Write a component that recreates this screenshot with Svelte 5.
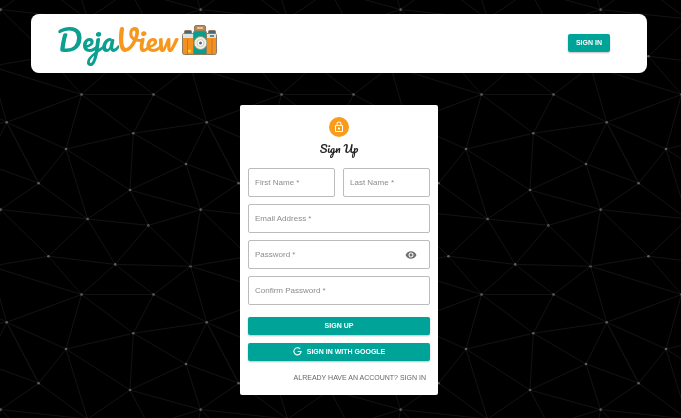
<script>
  const TILE = 200;
  const nodes = {
    a: [81.5, 94.5], b: [153.5, 94.5], c: [6.7, 122.3], d: [133.3, 133.3],
    e: [66, 149], f: [186, 164], g: [38.6, 183.2], h: [130, 190],
    i: [0.6, 209.6], j: [87.6, 219], k: [148.5, 225.4], l: [48.4, 256.3],
    m: [115.2, 264.4], n: [190.6, 266.3]
  };
  // from, to, and how many tiles right / down the end node lies
  const edges = [
    ['a', 'b'], ['a', 'c'], ['a', 'e'], ['a', 'd'], ['b', 'd'], ['b', 'c', 1],
    ['c', 'e'], ['c', 'g'], ['d', 'e'], ['d', 'c', 1], ['d', 'f'], ['d', 'h'],
    ['e', 'g'], ['e', 'h'], ['e', 'j'], ['f', 'c', 1], ['f', 'h'], ['f', 'g', 1],
    ['f', 'i', 1], ['g', 'i'], ['g', 'j'], ['g', 'c'], ['h', 'j'], ['h', 'k'],
    ['h', 'i', 1], ['i', 'j'], ['i', 'l'], ['i', 'k', -1], ['i', 'n', -1],
    ['j', 'l'], ['j', 'm'], ['j', 'k'], ['k', 'm'], ['k', 'n'], ['l', 'm'],
    ['l', 'a', 0, 1], ['m', 'n'], ['m', 'a', 0, 1], ['m', 'b', 0, 1],
    ['n', 'b', 0, 1], ['n', 'c', 1, 1], ['n', 'l', 1], ['n', 'a', 1, 1]
  ];
  const copies = [-1, 0, 1].flatMap((x) => [-2, -1, 0, 1].map((y) => [x * TILE, y * TILE]));
  const lines = edges.map(([from, to, dx = 0, dy = 0]) => {
    const [x1, y1] = nodes[from];
    const [x2, y2] = nodes[to];
    return `M${x1} ${y1}L${x2 + dx * TILE} ${y2 + dy * TILE}`;
  }).join('');

  const fields = [
    { id: 'firstName', label: 'First Name', type: 'text', half: true },
    { id: 'lastName', label: 'Last Name', type: 'text', half: true },
    { id: 'email', label: 'Email Address', type: 'email' },
    { id: 'password', label: 'Password', type: 'password', reveal: true },
    { id: 'confirmPassword', label: 'Confirm Password', type: 'password' }
  ];
  let values = $state({ firstName: '', lastName: '', email: '', password: '', confirmPassword: '' });
  let shown = $state(false);
</script>

<svg class="backdrop" aria-hidden="true">
  <defs>
    <pattern id="mesh" width={TILE} height={TILE} patternUnits="userSpaceOnUse">
      {#each copies as [x, y]}
        <g transform="translate({x} {y})">
          <path d={lines} stroke="#121212" stroke-width="1" fill="none" />
          {#each Object.values(nodes) as [cx, cy]}
            <circle {cx} {cy} r="1.3" fill="#5c5c5c" />
          {/each}
        </g>
      {/each}
    </pattern>
  </defs>
  <rect width="100%" height="100%" fill="#000" />
  <rect width="100%" height="100%" fill="url(#mesh)" />
</svg>

<div class="page">
  <header>
    <a class="brand" href="#home">
      <span class="name"><span class="deja">Deja</span><span class="view">View</span></span>
      <svg class="camera" viewBox="0 0 37 32" aria-hidden="true">
        <g stroke="#8d7b62" stroke-width="1">
          <rect x="3.500" y="6.500" width="7" height="4" rx="1" fill="#4b6672" />
          <rect x="27.500" y="6.500" width="7" height="4" rx="1" fill="#4b6672" />
          <rect x="1.500" y="9.500" width="34" height="21" rx="2" fill="#f4901e" />
          <path d="M2 10h10v4H2zM26 10h9v4h-9z" fill="#dce5e5" stroke="none" />
          <rect x="13.500" y="1.500" width="11" height="6" rx="1.500" fill="#b98653" />
          <path d="M16 4h6" stroke="#f7d8ac" stroke-width="1.500" />
          <path d="M12.500 8.500q0-1.500 1.500-1.500h10q1.500 0 1.500 1.500v22h-13z" fill="#089d8d" />
        </g>
        <path d="M6.500 15v15M31 15v15" stroke="#bf7930" />
        <path d="M29 12h4" stroke="#4b6672" stroke-width="1.500" />
        <circle cx="8.500" cy="27" r="1.600" fill="#ffd334" />
        <circle cx="19.500" cy="19" r="6.500" fill="#f3f0de" stroke="#8d9b81" />
        <circle cx="19.500" cy="19" r="3.500" fill="#fff" stroke="#c7c9bb" />
        <circle cx="19.500" cy="19" r="1.500" fill="#5a6466" />
      </svg>
    </a>
    <button class="primary" type="button">SIGN IN</button>
  </header>

  <main>
    <div class="avatar">
      <svg viewBox="0 0 24 24" aria-hidden="true">
        <path d="M12 17c1.100 0 2-.9 2-2s-.9-2-2-2-2 .9-2 2 .9 2 2 2zm6-9h-1V6c0-2.760-2.240-5-5-5S7 3.240 7 6v2H6c-1.100 0-2 .9-2 2v10c0 1.100.9 2 2 2h12c1.100 0 2-.9 2-2V10c0-1.100-.9-2-2-2zM8.900 6c0-1.710 1.390-3.100 3.100-3.100s3.100 1.390 3.100 3.100v2H8.900V6zM18 20H6V10h12v10z" />
      </svg>
    </div>
    <h1>Sign Up</h1>
    <form onsubmit={(event) => event.preventDefault()}>
      <div class="fields">
        {#each fields as field}
          <div class="field" class:half={field.half}>
            <input
              id={field.id}
              type={field.type === 'password' && shown ? 'text' : field.type}
              bind:value={values[field.id]}
              required
            />
            <label class:filled={values[field.id]} for={field.id}>{field.label} *</label>
            {#if field.reveal}
              <button class="eye" type="button" aria-label="Toggle password visibility" onclick={() => (shown = !shown)}>
                <svg viewBox="0 0 24 24" aria-hidden="true">
                  <path d="M12 4.500C7 4.500 2.730 7.610 1 12c1.730 4.390 6 7.500 11 7.500s9.270-3.110 11-7.500c-1.730-4.390-6-7.500-11-7.500zM12 17c-2.760 0-5-2.240-5-5s2.240-5 5-5 5 2.240 5 5-2.240 5-5 5zm0-8c-1.660 0-3 1.340-3 3s1.340 3 3 3 3-1.340 3-3-1.340-3-3-3z" />
                </svg>
              </button>
            {/if}
          </div>
        {/each}
      </div>
      <div class="actions">
        <button class="primary" type="submit">SIGN UP</button>
        <button class="primary" type="button">
          <svg class="google" viewBox="0 0 20 20" aria-hidden="true">
            <path d="M16.200 4.400A8 8 0 1 0 18 10h-7.500" />
          </svg>
          SIGN IN WITH GOOGLE
        </button>
      </div>
      <a class="switch" href="#signin">ALREADY HAVE AN ACCOUNT? SIGN IN</a>
    </form>
  </main>
</div>

<style>
  :global(body) {
    margin: 0;
    background: #000;
  }
  .backdrop {
    position: fixed;
    inset: 0;
    width: 100%;
    height: 100%;
  }
  .page {
    position: relative;
    padding: 14px 34px 23px 31px;
    font-family: "Liberation Sans", Arial, sans-serif;
  }
  header {
    display: flex;
    align-items: center;
    justify-content: space-between;
    padding: 7px 37px 9px 26px;
    border-radius: 8px;
    background: #fff;
  }
  .brand {
    display: flex;
    align-items: center;
    gap: 3px;
    padding-bottom: 6px;
    text-decoration: none;
  }
  .name {
    font: 30px/37px Pacifico, "Liberation Serif", cursive;
  }
  .deja {
    color: #0a9f90;
  }
  .view {
    color: #f7981d;
  }
  .camera {
    width: 37px;
    height: 32px;
  }
  button {
    border: 0;
    font-family: inherit;
    cursor: pointer;
  }
  .primary {
    display: flex;
    align-items: center;
    justify-content: center;
    gap: 5px;
    box-sizing: border-box;
    height: 18px;
    padding: 0 8px 1px;
    border-radius: 2px;
    background: #00a398;
    color: #fff;
    font-size: 7px;
    line-height: 9px;
    font-weight: bold;
    box-shadow: 0 1px 2px rgba(0, 0, 0, 0.25);
  }
  main {
    display: flex;
    flex-direction: column;
    align-items: center;
    box-sizing: border-box;
    max-width: 198px;
    margin: 32px auto 0;
    padding: 12px 8px;
    border-radius: 2px;
    background: #fff;
  }
  .avatar {
    display: grid;
    place-items: center;
    width: 20px;
    height: 20px;
    border-radius: 50%;
    background: #f89c1c;
  }
  .avatar svg {
    width: 12px;
    height: 12px;
    fill: #fff;
  }
  h1 {
    margin: 4px 0 11px;
    color: #222;
    font: 11px/16px Pacifico, "Liberation Serif", cursive;
  }
  form {
    display: flex;
    flex-direction: column;
    width: 100%;
  }
  .fields {
    display: grid;
    grid-template-columns: 1fr 1fr;
    gap: 7px 8px;
  }
  .field {
    position: relative;
    grid-column: span 2;
    height: 29px;
  }
  .half {
    grid-column: span 1;
  }
  input {
    box-sizing: border-box;
    width: 100%;
    height: 100%;
    padding: 0 6px;
    border: 1px solid #bcbcbc;
    border-radius: 2px;
    background: #fff;
    color: #222;
    font: 8px "Liberation Sans", Arial, sans-serif;
  }
  label {
    position: absolute;
    top: 10px;
    left: 7px;
    color: #8c8c8c;
    font-size: 8px;
    line-height: 10px;
    pointer-events: none;
  }
  .filled {
    top: -5px;
    padding: 0 2px;
    background: #fff;
  }
  .eye {
    position: absolute;
    top: 9px;
    right: 13px;
    display: grid;
    padding: 0;
    background: none;
  }
  .eye svg {
    width: 12px;
    height: 12px;
    fill: #707070;
  }
  .actions {
    display: grid;
    gap: 8px;
    margin-top: 12px;
  }
  .google {
    width: 9px;
    height: 9px;
    fill: none;
    stroke: #fff;
    stroke-width: 2.4;
  }
  .switch {
    align-self: flex-end;
    margin: 11px 4px 0 0;
    color: #666;
    font-size: 7px;
    line-height: 11px;
    text-decoration: none;
  }
</style>
